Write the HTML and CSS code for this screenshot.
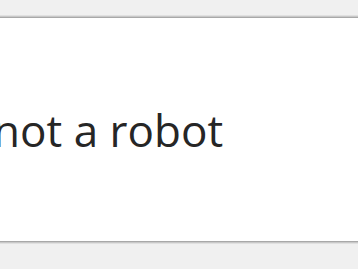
FILE: index.html
```html
<!DOCTYPE html>
<html>
<head>
  <meta charset="utf-8">
  <title>Captcha</title>
  <link rel="stylesheet" href="styles.css">
</head>
<body>
  <div class="captcha">
    <div class="captcha-box">
      <span class="captcha-label">I'm not a robot</span>
    </div>
  </div>
</body>
</html>
```

FILE: styles.css
```css
html, body {
  margin: 0;
  padding: 0;
}

body {
  background: #f0f0f0;
  font-family: 'Open Sans', 'Segoe UI', sans-serif;
  width: 358px;
  height: 269px;
  overflow: hidden;
}

.captcha {
  padding-top: 16px;
}

.captcha-box {
  height: 225px;
  background: #fff;
  border-top: 1px solid #c8c8c8;
  border-bottom: 1px solid #c8c8c8;
  box-shadow: 0 -1px 0 #e0e0e0, 0 1px 0 #e0e0e0, inset 0 1px 0 #a8a8a8, inset 0 -1px 0 #a8a8a8;
  display: flex;
  align-items: center;
  overflow: hidden;
}

.captcha-label {
  margin-left: -81px;
  white-space: nowrap;
  font-size: 44px;
  color: #262626;
  margin-top: 1px;
}
```
